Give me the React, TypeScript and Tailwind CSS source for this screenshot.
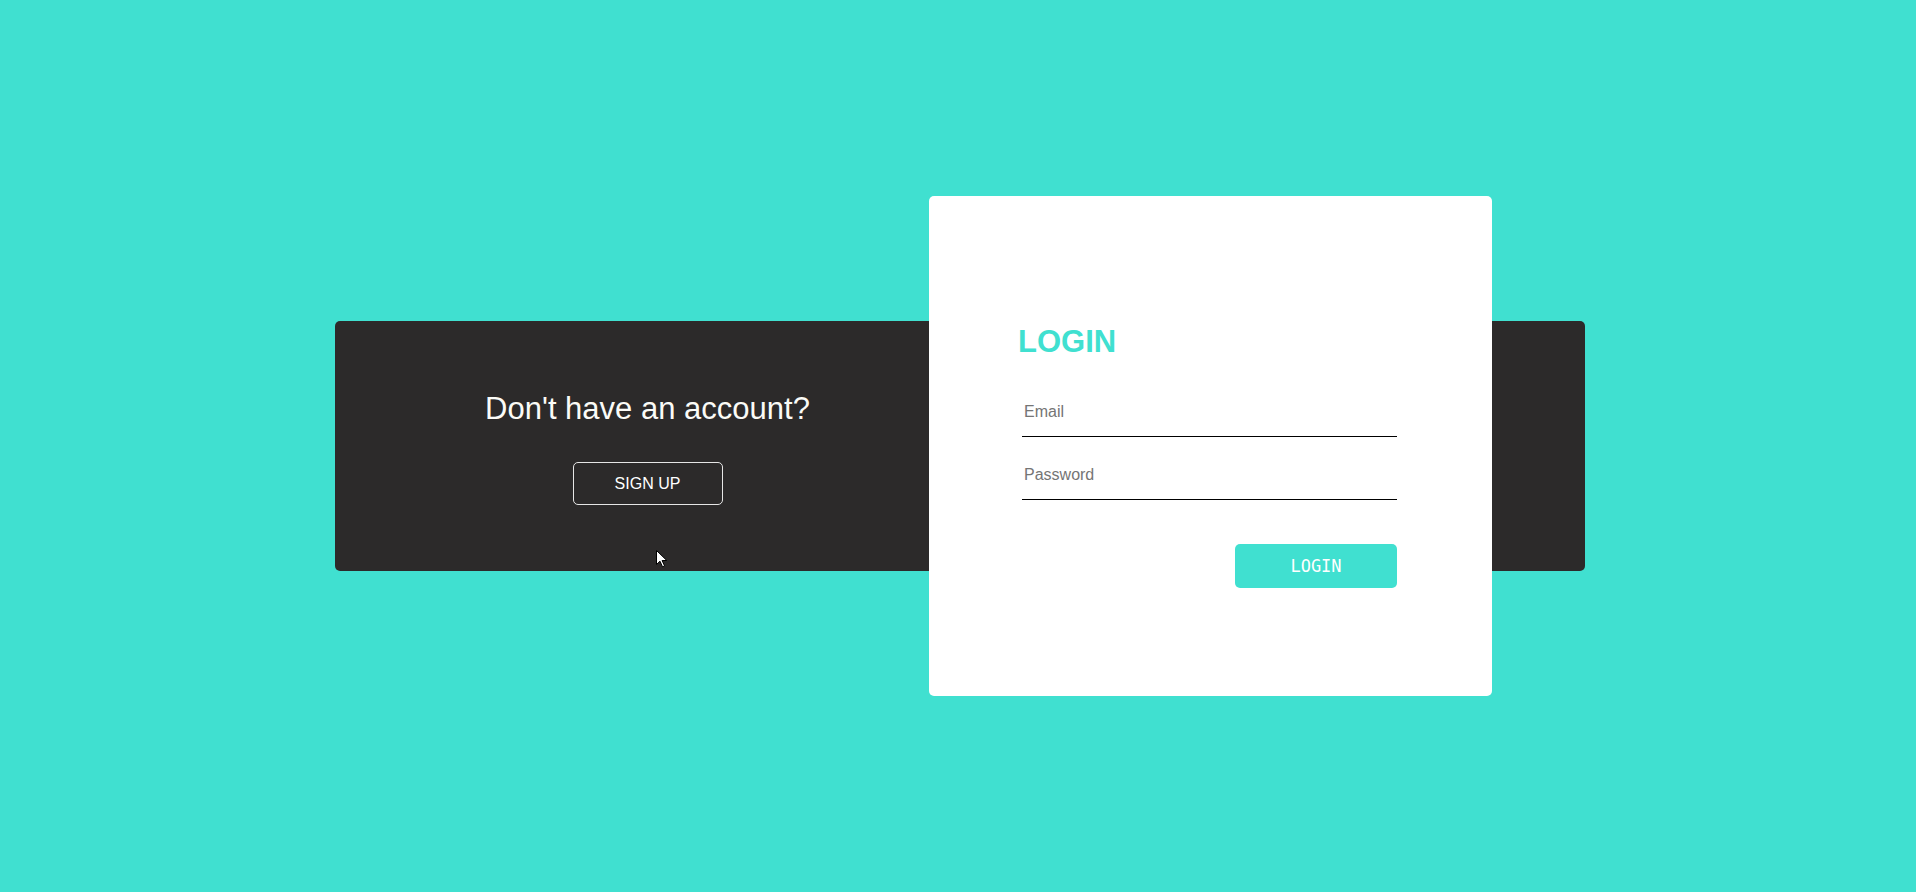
import React from "react";

export default function App() {
  return (
    <div
      className="relative w-full min-h-[892px] h-screen bg-[#40e0d0] flex items-center justify-center pl-[4px]"
      style={{ fontFamily: '"Liberation Sans", Arial, sans-serif' }}
    >
      <div className="relative w-[1250px] h-[500px] flex items-center">
        {/* dark back panel */}
        <div className="w-full h-[250px] bg-[#2c2a2a] rounded-[5px] flex">
          <div className="w-[625px] flex flex-col items-center pt-[72px]">
            <h2 className="text-[31px] leading-none text-[#fbfbf7] font-normal">
              Don't have an account?
            </h2>
            <button className="mt-[38px] w-[150px] h-[43px] border border-[#e6e6e6] rounded-[5px] text-white text-[16px] leading-none">
              SIGN UP
            </button>
          </div>
          <div className="w-[625px]" />
        </div>

        {/* login card */}
        <div className="absolute left-[594px] top-0 w-[563px] h-[500px] bg-white rounded-[5px] flex flex-col">
          <h1 className="mt-[130px] ml-[89px] text-[31px] leading-none font-bold text-[#40e0d0]">
            LOGIN
          </h1>
          <div className="mt-[39px] ml-[93px] w-[375px] flex flex-col gap-[22px]">
            <input
              type="text"
              placeholder="Email"
              className="w-full pt-[6px] pb-[14px] pl-[2px] leading-[20px] text-[16px] border-b border-black outline-none bg-transparent placeholder:text-[#757575]"
            />
            <input
              type="password"
              placeholder="Password"
              className="w-full pt-[6px] pb-[14px] pl-[2px] leading-[20px] text-[16px] border-b border-black outline-none bg-transparent placeholder:text-[#757575]"
            />
            <div className="flex justify-end mt-[22px]">
              <button
                className="w-[162px] h-[44px] bg-[#40e0d0] rounded-[5px] text-white text-[17px] leading-none"
                style={{ fontFamily: '"DejaVu Sans Mono", monospace' }}
              >
                LOGIN
              </button>
            </div>
          </div>
        </div>
      </div>

      {/* mouse cursor */}
      <svg
        className="absolute left-[656px] top-[550px]"
        width="12"
        height="18"
        viewBox="0 0 12 18"
      >
        <path
          d="M0.5 0.5 L0.5 14.5 L4 11.2 L6.5 16.8 L8.6 15.9 L6.1 10.5 L10.8 10.5 Z"
          fill="white"
          stroke="black"
          strokeWidth="1"
          strokeLinejoin="round"
        />
      </svg>
    </div>
  );
}
